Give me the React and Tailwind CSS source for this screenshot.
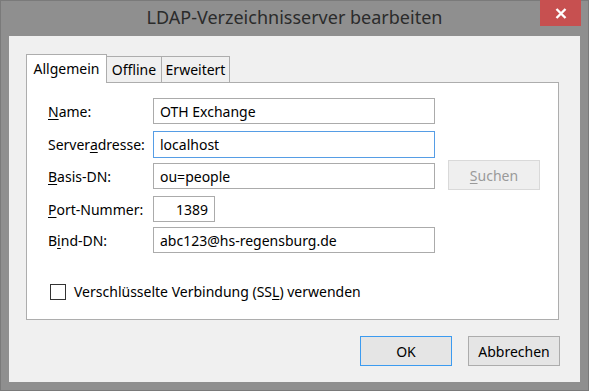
import React from 'react';

const font = { fontFamily: '"Noto Sans", "Open Sans", sans-serif' };

function Key({ children }) {
  return <span className="underline underline-offset-2 decoration-1">{children}</span>;
}

function Field({ value, focused, className = '', right }) {
  return (
    <div
      className={`h-[26px] bg-white border flex items-center px-[6px] text-[14px] text-black ${focused ? 'border-[#569de5]' : 'border-[#ababab]'} ${right ? 'justify-end' : ''} ${className}`}>
      {value}
    </div>
  );
}

function Row({ label, children, className = '' }) {
  return (
    <div className={`flex items-center ${className}`}>
      <div className="w-[105px] text-[14px] text-black">{label}</div>
      {children}
    </div>
  );
}

export default function App() {
  return (
    <div className="w-[589px] h-[391px] bg-[#8f8f8f] border border-[#7a7a7a] flex flex-col" style={font}>
      {/* title bar */}
      <div className="h-[35px] relative flex items-center justify-center">
        <span className="text-[18px] text-[#2b2b2b] -mt-[2px]">LDAP-Verzeichnisserver bearbeiten</span>
        <div className="absolute right-[7px] -top-px w-[41px] h-[26px] bg-[#c75050] flex items-center justify-center">
          <svg width="12" height="11" viewBox="0 0 12 11">
            <path d="M1.5 1 L10.5 10 M10.5 1 L1.5 10" stroke="white" strokeWidth="2.4" />
          </svg>
        </div>
      </div>

      {/* client area */}
      <div className="flex-1 mx-[8px] mb-[8px] bg-[#f0f0f0] flex flex-col">
        <div className="pl-[17px] pr-[21px] pt-[17px]">
          {/* tabs */}
          <div className="flex items-end h-[29px] text-[14px] text-black">
            <div className="w-[81px] h-[29px] bg-white border border-b-0 border-[#adadad] flex items-center justify-center relative z-10 -mb-px pb-[1px]">
              Allgemein
            </div>
            <div className="w-[55px] h-[26px] bg-[#f0f0f0] border border-l-0 border-b-0 border-[#adadad] flex items-center justify-center">
              Offline
            </div>
            <div className="w-[68px] h-[26px] bg-[#f0f0f0] border border-l-0 border-b-0 border-[#adadad] flex items-center justify-center">
              Erweitert
            </div>
          </div>

          {/* panel */}
          <div className="h-[238px] bg-white border border-[#adadad] pl-[21px] pt-[15px]">
            <Row label={<><Key>N</Key>ame:</>}>
              <Field value="OTH Exchange" className="w-[282px]" />
            </Row>
            <Row label={<>Server<Key>a</Key>dresse:</>} className="mt-[7px]">
              <Field value="localhost" focused className="w-[282px] h-[27px]" />
            </Row>
            <div className="flex items-start mt-[2px]">
              <div className="w-[105px] h-[26px] mt-[3px] flex items-center text-[14px] text-black">
                <span><Key>B</Key>asis-DN:</span>
              </div>
              <Field value="ou=people" className="w-[282px] mt-[3px]" />
              <div className="ml-[13px] w-[92px] h-[30px] bg-[#efefef] border border-[#d9d9d9] flex items-center justify-center text-[14px] text-[#9a9a9a]">
                <span><Key>S</Key>uchen</span>
              </div>
            </div>
            <Row label={<><Key>P</Key>ort-Nummer:</>} className="mt-[6px]">
              <Field value="1389" right className="w-[62px] h-[21px] px-[2px]" />
            </Row>
            <Row label={<>B<Key>i</Key>nd-DN:</>} className="mt-[5px]">
              <Field value="abc123@hs-regensburg.de" className="w-[282px]" />
            </Row>
            <div className="flex items-center mt-[28px] pl-[2px]">
              <div className="w-[16px] h-[16px] border border-[#333] bg-white" />
              <span className="ml-[8px] text-[14px] text-black">
                Verschlüsselte Verbindung (SS<Key>L</Key>) verwenden
              </span>
            </div>
          </div>
        </div>

        {/* buttons */}
        <div className="flex justify-end gap-[16px] pr-[20px] mt-[16px] text-[14px] text-black">
          <div className="w-[92px] h-[30px] bg-[#e5e5e5] border border-[#3c9bf0] flex items-center justify-center">
            OK
          </div>
          <div className="w-[92px] h-[30px] bg-[#e5e5e5] border border-[#acacac] flex items-center justify-center">
            Abbrechen
          </div>
        </div>
      </div>
    </div>
  );
}
